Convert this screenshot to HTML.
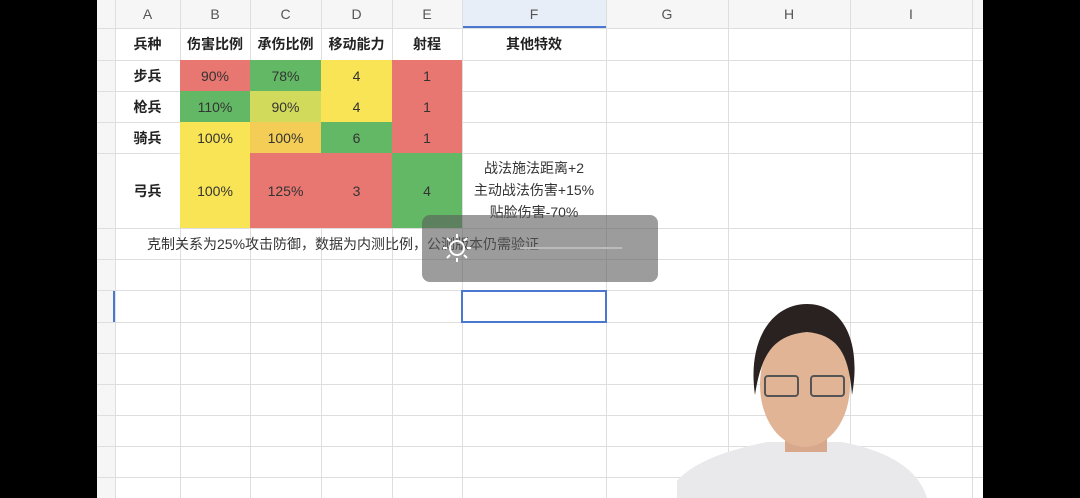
<!DOCTYPE html>
<html><head><meta charset="utf-8"><style>
*{margin:0;padding:0;box-sizing:border-box}
body{width:1080px;height:498px;background:#000;position:relative;overflow:hidden;font-family:"Liberation Sans","Noto Sans CJK SC",sans-serif}
#sheet{position:absolute;left:97px;top:0;width:886px;height:498px;background:#fff;overflow:hidden}
.c{position:absolute;display:flex;align-items:center;justify-content:center;font-size:14px;color:#333;text-align:center}
.h{color:#555;font-size:14px}
.b{font-weight:bold;color:#222}
.vl{position:absolute;top:0;width:1px;height:498px;background:#dedede}
.hl{position:absolute;left:0;height:1px;width:886px;background:#dedede}
</style></head><body>
<div id="sheet">
<div style="position:absolute;left:0;top:0;width:886px;height:28px;background:#f6f6f6"></div>
<div style="position:absolute;left:0;top:0;width:18px;height:498px;background:#f6f6f6"></div>
<div style="position:absolute;left:365px;top:0;width:144px;height:28px;background:#e8eef8"></div>
<div style="position:absolute;left:365px;top:26px;width:144px;height:2px;background:#4a78d0"></div>
<div style="position:absolute;left:16px;top:290px;width:2px;height:32px;background:#4a78d0"></div>
<div class="vl" style="left:18px"></div><div class="vl" style="left:83px"></div><div class="vl" style="left:153px"></div><div class="vl" style="left:224px"></div><div class="vl" style="left:295px"></div><div class="vl" style="left:365px"></div><div class="vl" style="left:509px"></div><div class="vl" style="left:631px"></div><div class="vl" style="left:753px"></div><div class="vl" style="left:875px"></div>
<div class="hl" style="top:28px"></div><div class="hl" style="top:60px"></div><div class="hl" style="top:91px"></div><div class="hl" style="top:122px"></div><div class="hl" style="top:153px"></div><div class="hl" style="top:228px"></div><div class="hl" style="top:259px"></div><div class="hl" style="top:290px"></div><div class="hl" style="top:322px"></div><div class="hl" style="top:353px"></div><div class="hl" style="top:384px"></div><div class="hl" style="top:415px"></div><div class="hl" style="top:446px"></div><div class="hl" style="top:477px"></div>
<div class="c h" style="left:18px;top:0;width:65px;height:28px">A</div>
<div class="c h" style="left:83px;top:0;width:70px;height:28px">B</div>
<div class="c h" style="left:153px;top:0;width:71px;height:28px">C</div>
<div class="c h" style="left:224px;top:0;width:71px;height:28px">D</div>
<div class="c h" style="left:295px;top:0;width:70px;height:28px">E</div>
<div class="c h" style="left:365px;top:0;width:144px;height:28px">F</div>
<div class="c h" style="left:509px;top:0;width:122px;height:28px">G</div>
<div class="c h" style="left:631px;top:0;width:122px;height:28px">H</div>
<div class="c h" style="left:753px;top:0;width:122px;height:28px">I</div>
<div class="c b" style="left:18px;top:28px;width:65px;height:32px">兵种</div>
<div class="c b" style="left:83px;top:28px;width:70px;height:32px">伤害比例</div>
<div class="c b" style="left:153px;top:28px;width:71px;height:32px">承伤比例</div>
<div class="c b" style="left:224px;top:28px;width:71px;height:32px">移动能力</div>
<div class="c b" style="left:295px;top:28px;width:70px;height:32px">射程</div>
<div class="c b" style="left:365px;top:28px;width:144px;height:32px">其他特效</div>
<div class="c b" style="left:18px;top:60px;width:65px;height:31px">步兵</div>
<div class="c b" style="left:18px;top:91px;width:65px;height:31px">枪兵</div>
<div class="c b" style="left:18px;top:122px;width:65px;height:31px">骑兵</div>
<div class="c b" style="left:18px;top:153px;width:65px;height:75px">弓兵</div>
<div class="c" style="left:83px;top:60px;width:70px;height:31px;background:#e87671">90%</div>
<div class="c" style="left:153px;top:60px;width:71px;height:31px;background:#63b865">78%</div>
<div class="c" style="left:224px;top:60px;width:71px;height:31px;background:#f8e455">4</div>
<div class="c" style="left:295px;top:60px;width:70px;height:31px;background:#e87671">1</div>
<div class="c" style="left:83px;top:91px;width:70px;height:31px;background:#63b865">110%</div>
<div class="c" style="left:153px;top:91px;width:71px;height:31px;background:#d2da5c">90%</div>
<div class="c" style="left:224px;top:91px;width:71px;height:31px;background:#f8e455">4</div>
<div class="c" style="left:295px;top:91px;width:70px;height:31px;background:#e87671">1</div>
<div class="c" style="left:83px;top:122px;width:70px;height:31px;background:#f8e455">100%</div>
<div class="c" style="left:153px;top:122px;width:71px;height:31px;background:#f4cd57">100%</div>
<div class="c" style="left:224px;top:122px;width:71px;height:31px;background:#63b865">6</div>
<div class="c" style="left:295px;top:122px;width:70px;height:31px;background:#e87671">1</div>
<div class="c" style="left:83px;top:153px;width:70px;height:75px;background:#f8e455">100%</div>
<div class="c" style="left:153px;top:153px;width:71px;height:75px;background:#e87671">125%</div>
<div class="c" style="left:224px;top:153px;width:71px;height:75px;background:#e87671">3</div>
<div class="c" style="left:295px;top:153px;width:70px;height:75px;background:#63b865">4</div>
<div style="position:absolute;left:365px;top:157px;width:144px;font-size:14px;line-height:22px;color:#333;text-align:center">战法施法距离+2<br>主动战法伤害+15%<br>贴脸伤害-70%</div>
<div class="c" style="left:30px;top:228px;width:470px;height:31px;justify-content:flex-start;padding-left:20px">克制关系为25%攻击防御，数据为内测比例，公测版本仍需验证</div>
<div style="position:absolute;left:364px;top:290px;width:146px;height:33px;border:2px solid #4a78d0"></div>
<svg style="position:absolute;left:580px;top:300px" width="306" height="198" viewBox="0 0 306 198">
<path d="M-10 198 C0 165 50 150 90 142 L165 142 C205 150 240 165 250 198 Z" fill="#e9e9ec"/>
<path d="M108 125 L108 152 L150 152 L150 125 Z" fill="#d8a88c"/>
<ellipse cx="128" cy="85" rx="45" ry="62" fill="#e2b496"/>
<path d="M78 95 C70 40 95 4 130 4 C165 4 185 40 175 95 C172 55 162 35 130 32 C96 35 84 55 78 95 Z" fill="#2a2220"/>
<rect x="88" y="76" width="33" height="20" rx="3" fill="none" stroke="#555" stroke-width="2"/>
<rect x="134" y="76" width="33" height="20" rx="3" fill="none" stroke="#555" stroke-width="2"/>
</svg>
</div>
<div style="position:absolute;left:422px;top:215px;width:236px;height:67px;background:rgba(90,90,90,0.6);border-radius:8px"></div>
<svg style="position:absolute;left:442px;top:233px" width="30" height="30" viewBox="0 0 30 30"><circle cx="15" cy="15" r="7" fill="none" stroke="#fff" stroke-width="2"/><g stroke="#fff" stroke-width="2"><path d="M15 1v4M15 25v4M1 15h4M25 15h4M5 5l3 3M22 22l3 3M5 25l3-3M22 8l3-3"/></g></svg>
<div style="position:absolute;left:520px;top:247px;width:102px;height:2px;background:#bbb"></div>
</body></html>
